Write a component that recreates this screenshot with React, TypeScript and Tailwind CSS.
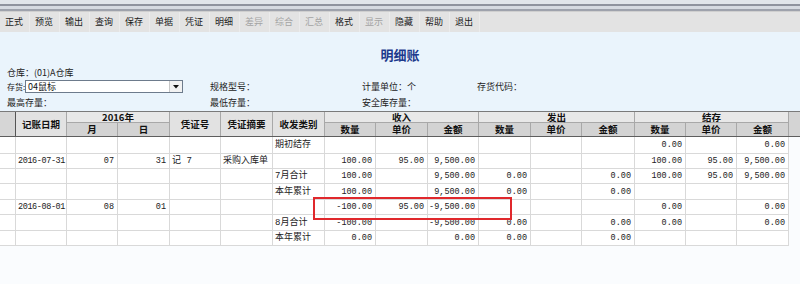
import React from "react";

const COLS =
  "grid-cols-[16px_51px_51px_52px_51px_52px_52px_51px_52px_51px_52px_51px_53px_51px_51px_52px_11px]";

const toolbar: { t: string; d?: boolean }[] = [
  { t: "正式" },
  { t: "预览" },
  { t: "输出" },
  { t: "查询" },
  { t: "保存" },
  { t: "单据" },
  { t: "凭证" },
  { t: "明细" },
  { t: "差异", d: true },
  { t: "综合", d: true },
  { t: "汇总", d: true },
  { t: "格式" },
  { t: "显示", d: true },
  { t: "隐藏" },
  { t: "帮助" },
  { t: "退出" },
];

type Cell = { v: string; a?: "l" | "r"; k?: "date" };
const L = (v: string): Cell => ({ v, a: "l" });
const D = (v: string): Cell => ({ v, a: "l", k: "date" });
const R = (v: string): Cell => ({ v, a: "r" });
const E: Cell = { v: "" };

const rows: { h: string; cells: Cell[] }[] = [
  {
    h: "h-[17px]",
    cells: [E, E, E, E, E, E, L("期初结存"), E, E, E, E, E, E, R("0.00"), E, R("0.00")],
  },
  {
    h: "h-[15px]",
    cells: [
      E,
      D("2016-07-31"),
      R("07"),
      R("31"),
      L("记 7"),
      L("采购入库单"),
      E,
      R("100.00"),
      R("95.00"),
      R("9,500.00"),
      E,
      E,
      E,
      R("100.00"),
      R("95.00"),
      R("9,500.00"),
    ],
  },
  {
    h: "h-[15px]",
    cells: [
      E,
      E,
      E,
      E,
      E,
      E,
      L("7月合计"),
      R("100.00"),
      E,
      R("9,500.00"),
      R("0.00"),
      E,
      R("0.00"),
      R("100.00"),
      R("95.00"),
      R("9,500.00"),
    ],
  },
  {
    h: "h-[16px]",
    cells: [
      E,
      E,
      E,
      E,
      E,
      E,
      L("本年累计"),
      R("100.00"),
      E,
      R("9,500.00"),
      R("0.00"),
      E,
      R("0.00"),
      E,
      E,
      E,
    ],
  },
  {
    h: "h-[15px]",
    cells: [
      E,
      D("2016-08-01"),
      R("08"),
      R("01"),
      E,
      E,
      E,
      R("-100.00"),
      R("95.00"),
      R("-9,500.00"),
      E,
      E,
      E,
      R("0.00"),
      E,
      R("0.00"),
    ],
  },
  {
    h: "h-[16px]",
    cells: [
      E,
      E,
      E,
      E,
      E,
      E,
      L("8月合计"),
      R("-100.00"),
      E,
      R("-9,500.00"),
      R("0.00"),
      E,
      R("0.00"),
      R("0.00"),
      E,
      R("0.00"),
    ],
  },
  {
    h: "h-[15px]",
    cells: [
      E,
      E,
      E,
      E,
      E,
      E,
      L("本年累计"),
      R("0.00"),
      E,
      R("0.00"),
      R("0.00"),
      E,
      R("0.00"),
      E,
      E,
      E,
    ],
  },
];

function HCell({
  children,
  cls = "",
}: {
  children?: React.ReactNode;
  cls?: string;
}) {
  return (
    <div
      className={
        "flex items-center justify-center whitespace-nowrap border-r border-[#a8a8a8] text-[9.5px] font-bold leading-[9px] text-[#111] " +
        cls
      }
    >
      {children}
    </div>
  );
}

export default function App() {
  return (
    <div className="relative w-[800px] h-[284px] overflow-hidden bg-[#eaf4fc] font-['Noto_Sans_CJK_SC',sans-serif] text-[#222]">
      {/* window top stripes */}
      <div className="h-[4px] bg-[#e1e5ea]" />
      <div className="h-[2px] bg-[#8f939e]" />
      <div className="h-[3px] bg-[#d6dae1]" />
      <div className="h-[2px] bg-[#9ea2ac]" />
      <div className="h-[1px] bg-[#cfcfcf]" />

      {/* toolbar */}
      <div className="flex h-[20px] items-center bg-[#e3e3e3]">
        {toolbar.map((b) => (
          <div
            key={b.t}
            className={
              "flex h-[20px] w-[30px] items-center pl-[5px] text-[9px] leading-[10px] border-r border-[#ebebeb] " +
              (b.d ? "text-[#a3a3a3]" : "text-[#1a1a1a]")
            }
          >
            {b.t}
          </div>
        ))}
      </div>

      {/* title */}
      <div className="h-[34px] pt-[16px] text-center text-[13px] font-bold leading-[14px] text-[#1c3a8c]">
        明细账
      </div>

      {/* info rows */}
      <div className="pl-[7px] text-[9px] leading-[14px] text-[#222]">
        <div className="h-[14px] whitespace-nowrap">仓库：(01)A仓库</div>
        <div className="flex h-[13px] items-center whitespace-nowrap">
          <div className="flex w-[203px] items-center">
            <span className="w-[18px] text-[8px] leading-[10px]">存货:</span>
            <div className="flex h-[13px] w-[158px] items-center border border-[#6d7b8c] bg-white">
              <span className="flex-1 pl-[2px] text-[9px] leading-[11px] text-[#111]">
                04鼠标
              </span>
              <div className="flex h-[11px] w-[13px] items-center justify-center border-l border-[#c8c8c8] bg-[#f2f2f2]">
                <svg width="6" height="4" viewBox="0 0 6 4">
                  <path d="M0 0 L6 0 L3 3.5 Z" fill="#111" />
                </svg>
              </div>
            </div>
          </div>
          <div className="w-[152px]">规格型号：</div>
          <div className="w-[115px]">计量单位：个</div>
          <div>存货代码：</div>
        </div>
        <div className="flex h-[17px] items-end whitespace-nowrap">
          <div className="w-[203px]">最高存量：</div>
          <div className="w-[152px]">最低存量：</div>
          <div className="w-[115px]">安全库存量：</div>
        </div>
      </div>

      {/* grid area */}
      <div className="mt-[1px] h-[200px] bg-[#fafcfe]">
        {/* header */}
        <div
          className={
            "grid " +
            COLS +
            " grid-rows-[11px_13px] border-t border-b border-t-[#7a7a7a] border-b-[#5e5e5e] bg-[#e3e3e3]"
          }
        >
          <HCell cls="row-span-2 bg-[#d6d6d6] border-r-[#555]" />
          <HCell cls="row-span-2 bg-[#e2e2e2]">记账日期</HCell>
          <HCell cls="col-span-2 border-b bg-[#e8e8e8]">2016年</HCell>
          <HCell cls="row-span-2 bg-[#e2e2e2]">凭证号</HCell>
          <HCell cls="row-span-2 bg-[#e2e2e2]">凭证摘要</HCell>
          <HCell cls="row-span-2 bg-[#e2e2e2]">收发类别</HCell>
          <HCell cls="col-span-3 border-b bg-[#e8e8e8]">收入</HCell>
          <HCell cls="col-span-3 border-b bg-[#e8e8e8]">发出</HCell>
          <HCell cls="col-span-3 border-b bg-[#e8e8e8]">结存</HCell>
          <HCell cls="row-span-2 bg-[#d4d4d4] border-r-0" />
          <HCell cls="bg-[#d3d3d3]">月</HCell>
          <HCell cls="bg-[#d3d3d3]">日</HCell>
          {["收入", "发出", "结存"].map((g) => (
            <React.Fragment key={g}>
              <HCell cls="bg-[#d3d3d3]">数量</HCell>
              <HCell cls="bg-[#d3d3d3]">单价</HCell>
              <HCell cls="bg-[#d3d3d3]">金额</HCell>
            </React.Fragment>
          ))}
        </div>

        {/* data rows */}
        {rows.map((r, i) => (
          <div key={i} className={"grid " + COLS + " " + r.h}>
            {r.cells.map((c, j) => (
              <div
                key={j}
                className={
                  "flex items-center overflow-hidden whitespace-nowrap border-r border-b border-[#d9d9d9] bg-white px-[2px] font-['Liberation_Mono','Noto_Sans_CJK_SC',monospace] text-[8.5px] leading-[10px] text-[#222] " +
                  (c.a === "r" ? "justify-end pr-[3px]" : "justify-start")
                }
              >
                <span
                  className={
                    c.k === "date"
                      ? "tracking-[-0.4px]"
                      : /[\u4e00-\u9fff]/.test(c.v)
                      ? "text-[9px]"
                      : ""
                  }
                >
                  {c.v}
                </span>
              </div>
            ))}
            <div />
          </div>
        ))}
      </div>

      {/* red highlight annotation */}
      <div className="absolute left-[313px] top-[197px] h-[23px] w-[199px] border-2 border-[#e0282c]" />
    </div>
  );
}
